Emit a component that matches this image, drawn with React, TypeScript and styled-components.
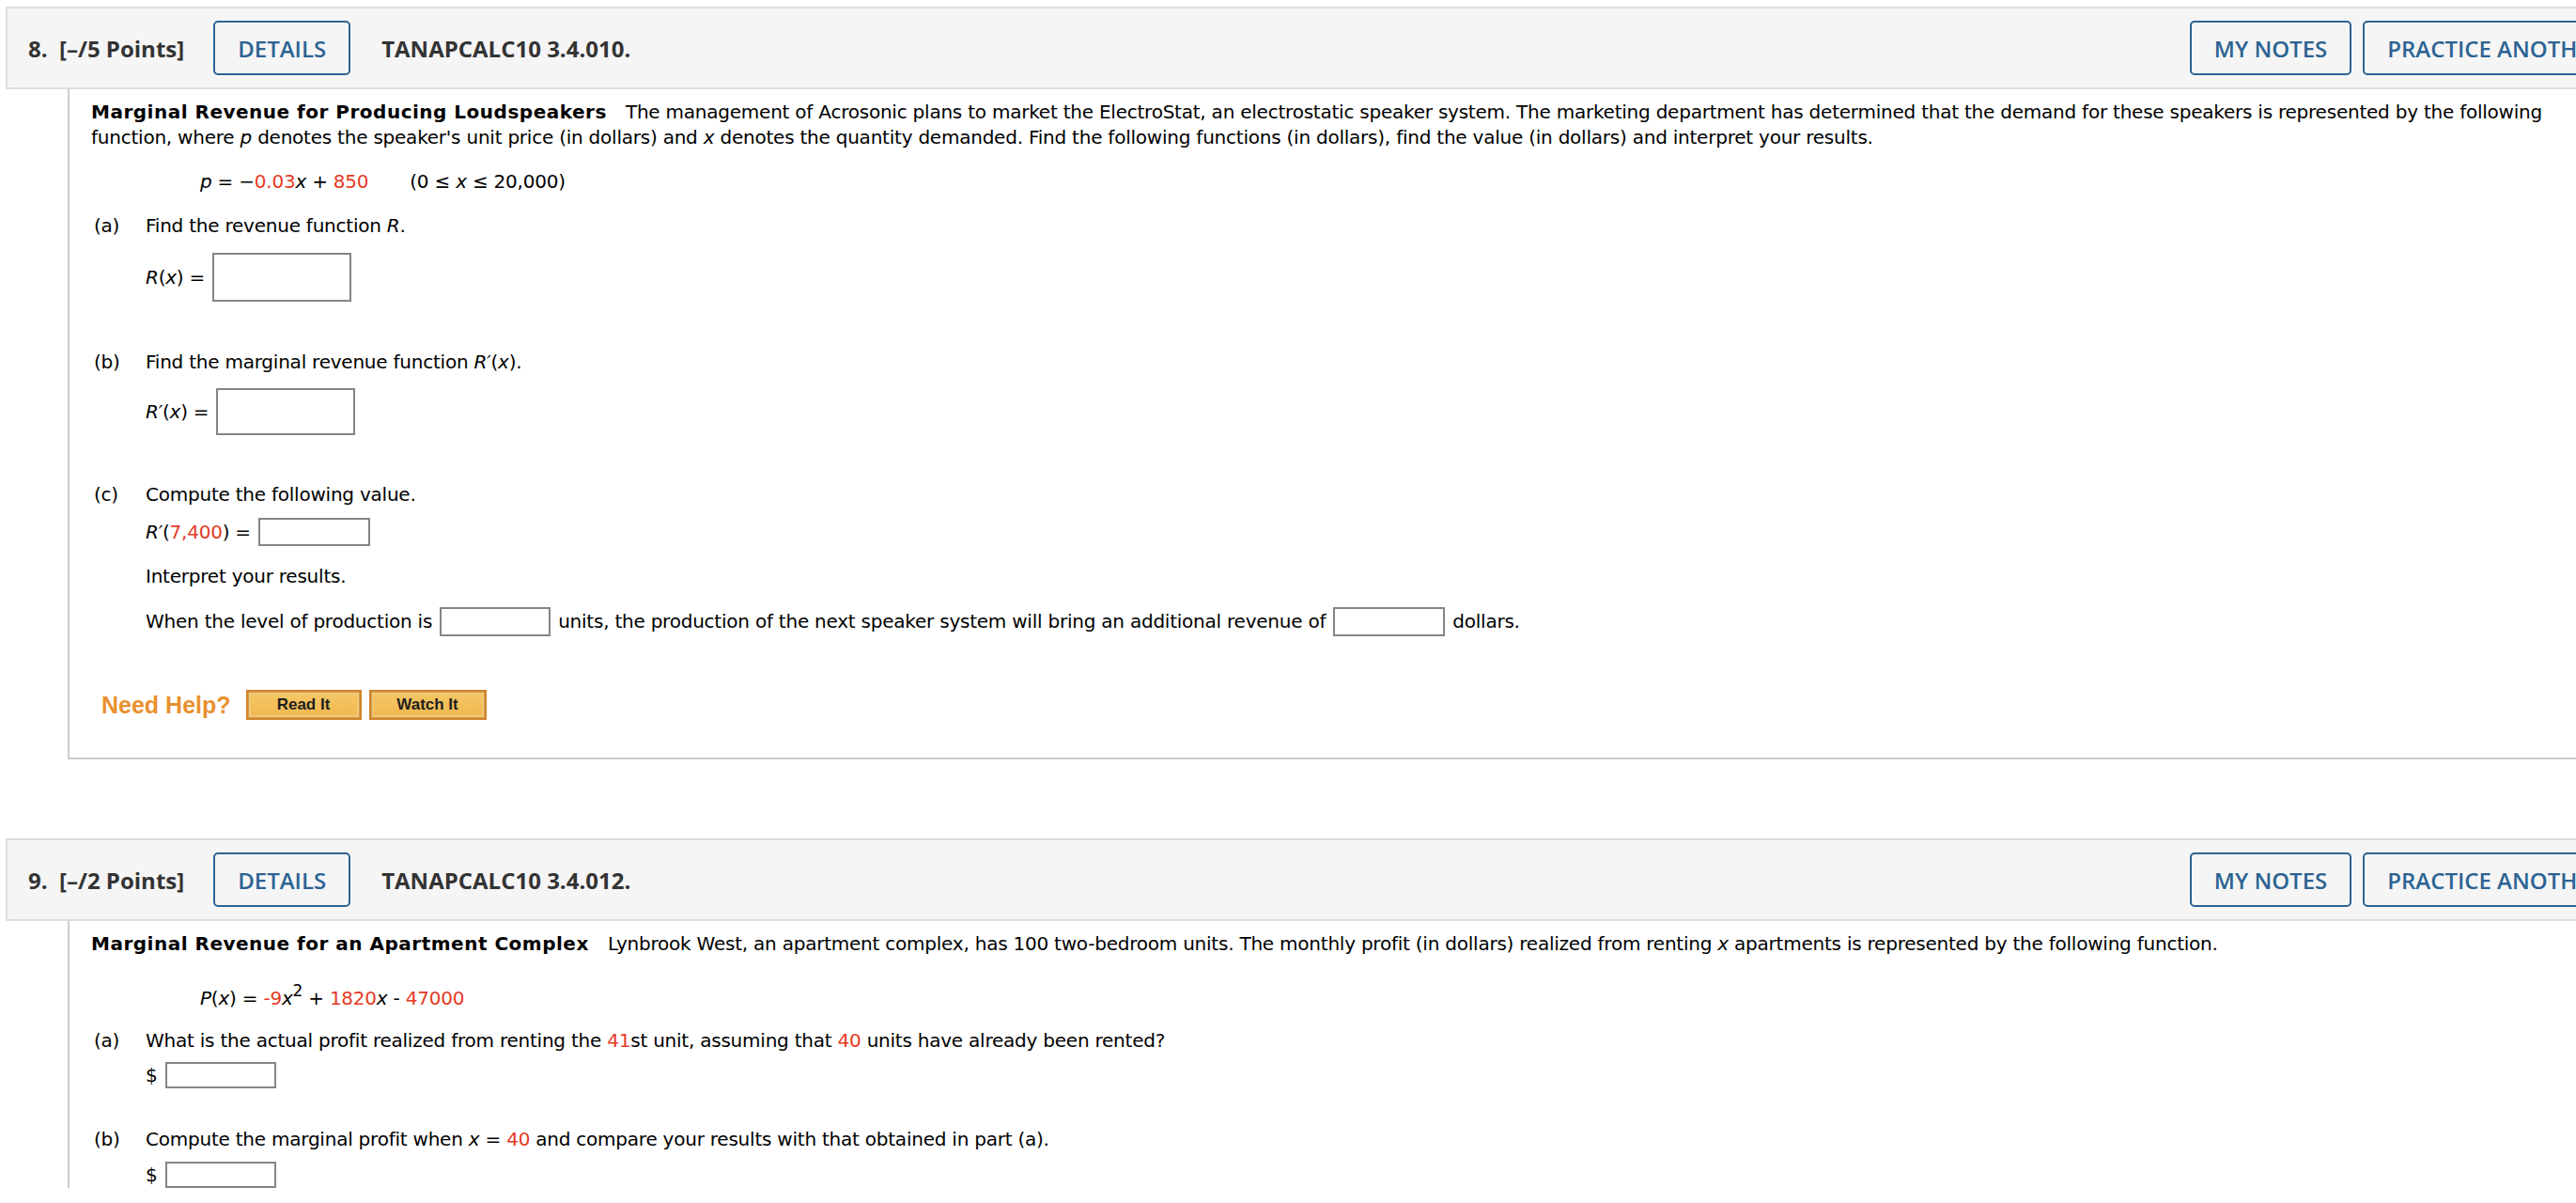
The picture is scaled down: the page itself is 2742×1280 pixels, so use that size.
import React from 'react';
import styled, { createGlobalStyle } from 'styled-components';

const GlobalStyle = createGlobalStyle`
  html, body {
    margin: 0;
    background: #fff;
    overflow: hidden;
  }
  body {
    font-family: "DejaVu Sans", Verdana, sans-serif;
    color: #000;
  }
`;

const red = '#e63a24';

const Page = styled.div`
  padding: 7px 0 0 6px;
  width: 2806px;
`;

const Question = styled.section<{ $gap?: number }>`
  margin-top: ${(p) => p.$gap ?? 0}px;
`;

const Header = styled.header`
  display: flex;
  align-items: center;
  height: 88px;
  box-sizing: border-box;
  padding: 0 12px 0 22px;
  background: #f5f5f5;
  border: 2px solid #dedede;
  font-family: "Open Sans", "Liberation Sans", sans-serif;
  font-size: 24px;
`;

const QNumber = styled.span`
  font-weight: 700;
  color: #333;
  white-space: pre;
`;

const QCode = styled.span`
  font-weight: 700;
  color: #333;
  margin-left: 33px;
`;

const HeadButton = styled.button<{ $ml?: number }>`
  height: 58px;
  margin-left: ${(p) => p.$ml ?? 0}px;
  padding: 0 24px;
  background: transparent;
  border: 2px solid #2c6393;
  border-radius: 5px;
  color: #2c6393;
  font-family: "Open Sans", "Liberation Sans", sans-serif;
  font-size: 24px;
  font-weight: 600;
  white-space: nowrap;
`;

const HeadRight = styled.div`
  display: flex;
  gap: 12px;
  margin-left: auto;
`;

const Body = styled.div<{ $open?: boolean }>`
  margin-left: 66px;
  border-left: 2px solid #cdcdcd;
  border-bottom: ${(p) => (p.$open ? 'none' : '2px solid #cdcdcd')};
  padding: 11px 60px ${(p) => (p.$open ? 0 : 40)}px 23px;
  font-size: 20px;
  line-height: 27px;
  letter-spacing: -0.23px;
`;

const Text = styled.p<{ $mt?: number }>`
  margin: ${(p) => p.$mt ?? 0}px 0 0;
`;

const Title = styled.b`
  margin-right: 14px;
  letter-spacing: 0.5px;
`;

const Formula = styled.div<{ $mt: number }>`
  margin-top: ${(p) => p.$mt}px;
  padding-left: 116px;
  white-space: pre;
`;

const Range = styled.span`
  margin-left: 44px;
`;

const Var = styled.i``;

const Num = styled.span`
  color: ${red};
`;

const Sup = styled.sup`
  font-size: 17px;
  line-height: 0;
  vertical-align: 9px;
`;

const Part = styled.div<{ $mt: number }>`
  display: grid;
  grid-template-columns: 55px 1fr;
  margin-top: ${(p) => p.$mt}px;
  padding-left: 3px;
`;

const PartLabel = styled.span``;

const PartContent = styled.div``;

const AnswerRow = styled.div<{ $mt: number }>`
  display: flex;
  align-items: center;
  gap: 8px;
  margin-top: ${(p) => p.$mt}px;
  white-space: pre;
`;

const AnswerBox = styled.span<{ $w: number; $h: number }>`
  display: inline-block;
  width: ${(p) => p.$w}px;
  height: ${(p) => p.$h}px;
  box-sizing: border-box;
  border: 2px solid #858585;
  background: #fff;
`;

const HelpRow = styled.div`
  display: flex;
  align-items: center;
  gap: 8px;
  margin-top: 57px;
  padding-left: 11px;
  letter-spacing: normal;
`;

const HelpLabel = styled.span`
  margin-right: 8px;
  font-family: "Liberation Sans", Arial, sans-serif;
  font-size: 25px;
  font-weight: 700;
  color: #e8902f;
`;

const HelpButton = styled.button<{ $w: number }>`
  width: ${(p) => p.$w}px;
  height: 32px;
  padding: 0;
  border: 2px solid #d48328;
  background: linear-gradient(#f6c767, #efb74d);
  box-shadow: inset 0 0 0 1px #c99f58, inset 0 0 0 3px #f3c873;
  font-family: "Liberation Sans", Arial, sans-serif;
  font-size: 17px;
  font-weight: 700;
  color: #1e1e1e;
`;

function QHeader({ num, points, code }: { num: number; points: number; code: string }) {
  return (
    <Header>
      <QNumber>{`${num}.  [–/${points} Points]`}</QNumber>
      <HeadButton $ml={31}>DETAILS</HeadButton>
      <QCode>{code}</QCode>
      <HeadRight>
        <HeadButton>MY NOTES</HeadButton>
        <HeadButton>PRACTICE ANOTHER</HeadButton>
      </HeadRight>
    </Header>
  );
}

function App() {
  return (
    <Page>
      <GlobalStyle />

      <Question>
        <QHeader num={8} points={5} code="TANAPCALC10 3.4.010." />
        <Body>
          <Text>
            <Title>Marginal Revenue for Producing Loudspeakers</Title> The management of
            Acrosonic plans to market the ElectroStat, an electrostatic speaker system. The
            marketing department has determined that the demand for these speakers is
            represented by the following function, where <Var>p</Var> denotes the speaker's unit
            price (in dollars) and <Var>x</Var> denotes the quantity demanded. Find the
            following functions (in dollars), find the value (in dollars) and interpret your
            results.
          </Text>
          <Formula $mt={20}>
            <Var>p</Var> = −<Num>0.03</Num>
            <Var>x</Var> + <Num>850</Num>
            <Range>
              (0 ≤ <Var>x</Var> ≤ 20,000)
            </Range>
          </Formula>

          <Part $mt={20}>
            <PartLabel>(a)</PartLabel>
            <PartContent>
              <Text>
                Find the revenue function <Var>R</Var>.
              </Text>
              <AnswerRow $mt={15}>
                <span>
                  <Var>R</Var>(<Var>x</Var>) =
                </span>
                <AnswerBox $w={148} $h={52} />
              </AnswerRow>
            </PartContent>
          </Part>

          <Part $mt={51}>
            <PartLabel>(b)</PartLabel>
            <PartContent>
              <Text>
                Find the marginal revenue function <Var>R′</Var>(<Var>x</Var>).
              </Text>
              <AnswerRow $mt={14}>
                <span>
                  <Var>R′</Var>(<Var>x</Var>) =
                </span>
                <AnswerBox $w={148} $h={50} />
              </AnswerRow>
            </PartContent>
          </Part>

          <Part $mt={50}>
            <PartLabel>(c)</PartLabel>
            <PartContent>
              <Text>Compute the following value.</Text>
              <AnswerRow $mt={11}>
                <span>
                  <Var>R′</Var>(<Num>7,400</Num>) =
                </span>
                <AnswerBox $w={119} $h={30} />
              </AnswerRow>
              <Text $mt={19}>Interpret your results.</Text>
              <AnswerRow $mt={19}>
                <span>When the level of production is</span>
                <AnswerBox $w={118} $h={31} />
                <span>units, the production of the next speaker system will bring an additional revenue of</span>
                <AnswerBox $w={119} $h={31} />
                <span>dollars.</span>
              </AnswerRow>
            </PartContent>
          </Part>

          <HelpRow>
            <HelpLabel>Need Help?</HelpLabel>
            <HelpButton $w={123}>Read It</HelpButton>
            <HelpButton $w={125}>Watch It</HelpButton>
          </HelpRow>
        </Body>
      </Question>

      <Question $gap={84}>
        <QHeader num={9} points={2} code="TANAPCALC10 3.4.012." />
        <Body $open>
          <Text>
            <Title>Marginal Revenue for an Apartment Complex</Title> Lynbrook West, an apartment
            complex, has 100 two-bedroom units. The monthly profit (in dollars) realized from
            renting <Var>x</Var> apartments is represented by the following function.
          </Text>
          <Formula $mt={31}>
            <Var>P</Var>(<Var>x</Var>) = <Num>-9</Num>
            <Var>x</Var>
            <Sup>2</Sup> + <Num>1820</Num>
            <Var>x</Var> - <Num>47000</Num>
          </Formula>

          <Part $mt={18}>
            <PartLabel>(a)</PartLabel>
            <PartContent>
              <Text>
                What is the actual profit realized from renting the <Num>41</Num>st unit,
                assuming that <Num>40</Num> units have already been rented?
              </Text>
              <AnswerRow $mt={9}>
                <span>$</span>
                <AnswerBox $w={118} $h={28} />
              </AnswerRow>
            </PartContent>
          </Part>

          <Part $mt={41}>
            <PartLabel>(b)</PartLabel>
            <PartContent>
              <Text>
                Compute the marginal profit when <Var>x</Var> = <Num>40</Num> and compare your
                results with that obtained in part (a).
              </Text>
              <AnswerRow $mt={10}>
                <span>$</span>
                <AnswerBox $w={118} $h={28} />
              </AnswerRow>
            </PartContent>
          </Part>
        </Body>
      </Question>
    </Page>
  );
}

export default App;
